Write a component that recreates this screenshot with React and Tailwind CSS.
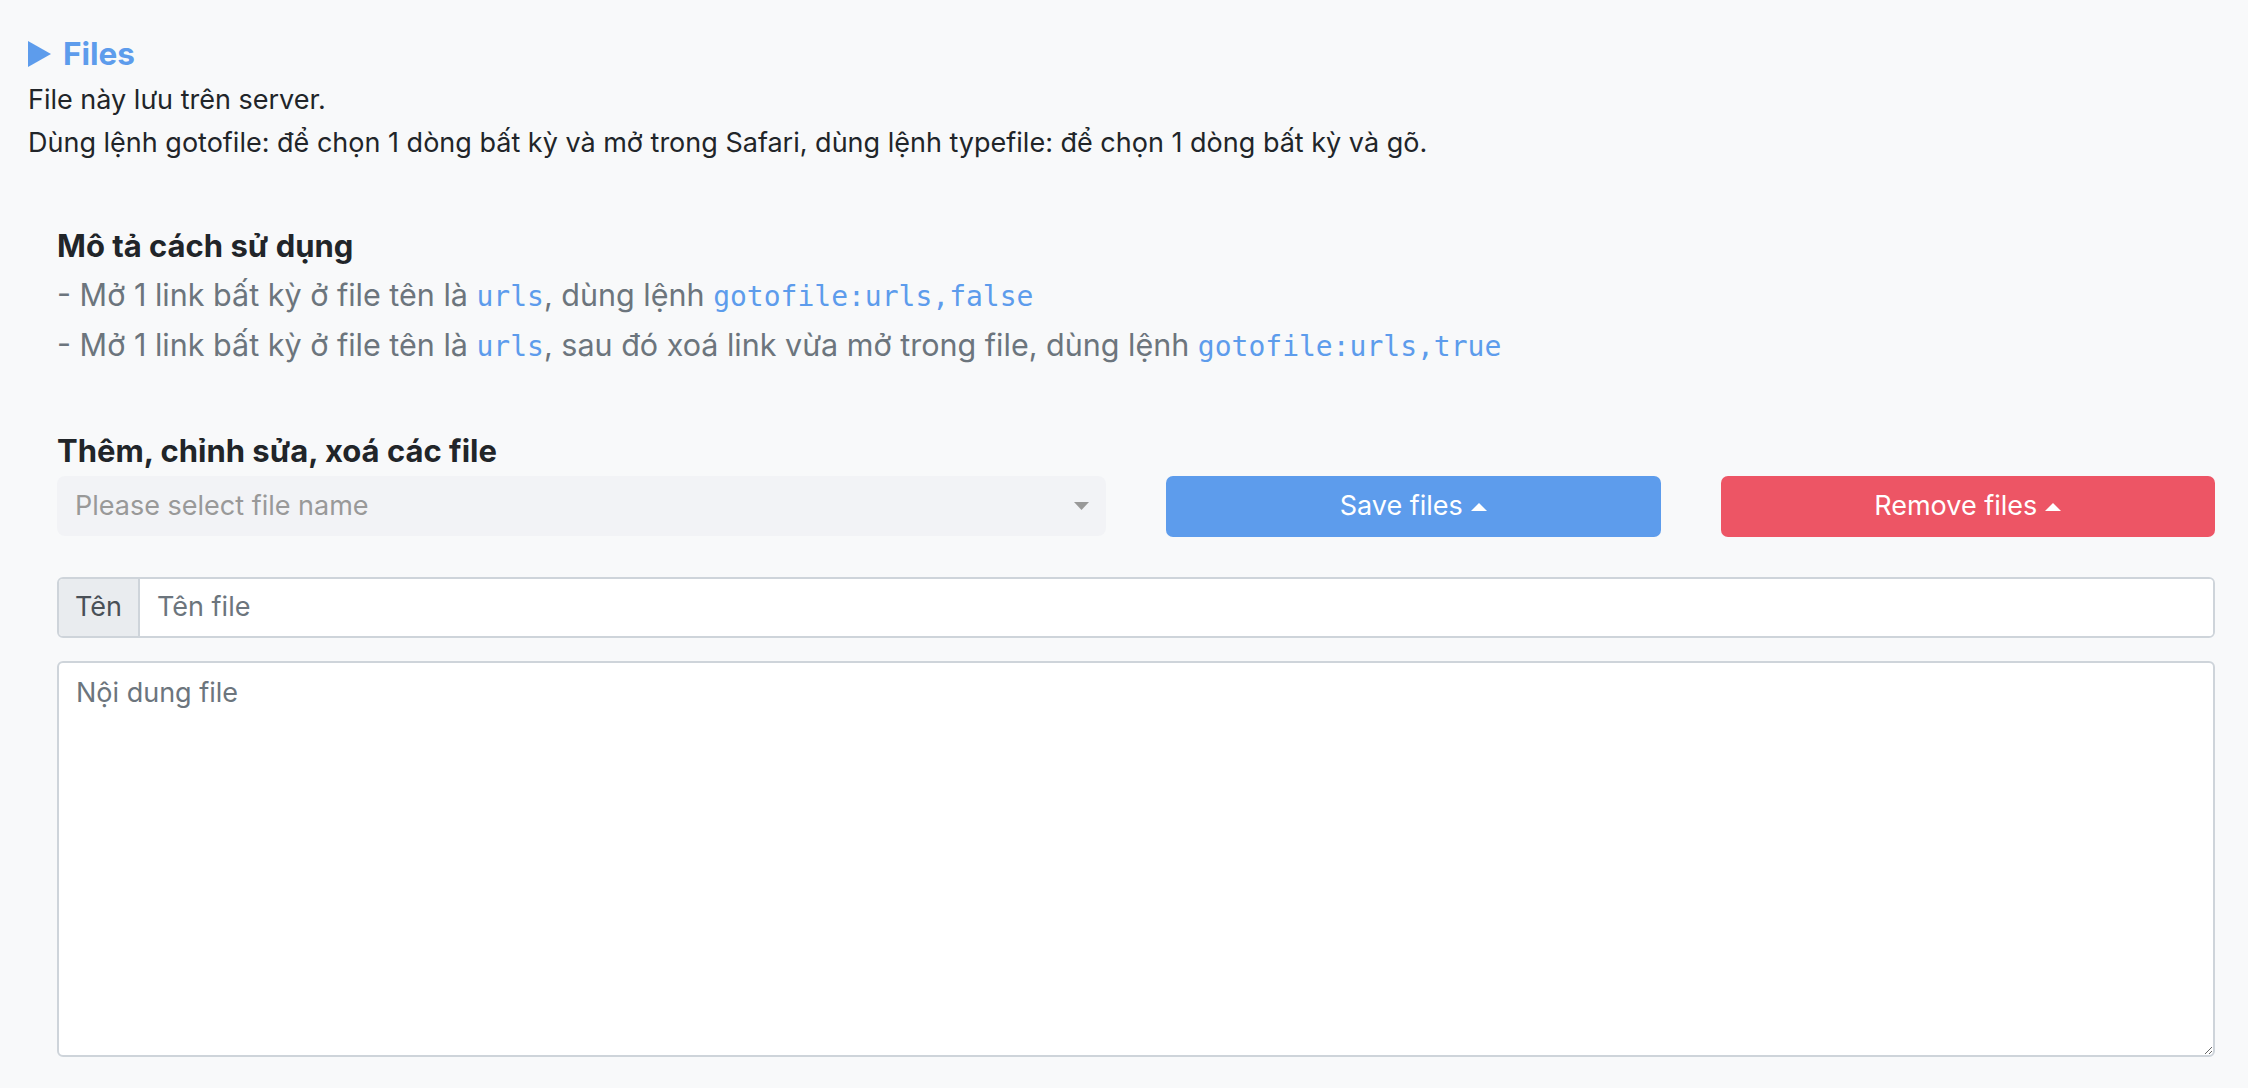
export default function App() {
  const sans = { fontFamily: "Inter, 'Noto Sans', sans-serif" };
  const mono = { fontFamily: "'DejaVu Sans Mono', monospace" };
  return (
    <div
      className="min-h-screen bg-[#f8f9fa] text-[#212529] pl-[28px] pt-[30px] pb-[30px]"
      style={sans}
    >
      {/* collapsible section header */}
      <div className="flex items-center gap-[12px] h-[48px] text-[#5d9cec]">
        <svg width="23" height="26" viewBox="0 0 23 26" className="shrink-0">
          <polygon points="0,0 23,13 0,26" fill="#5d9cec" />
        </svg>
        <span className="text-[31.5px] font-bold leading-[48px]">Files</span>
      </div>
      <div className="text-[27px] leading-[43px]">
        <div>File này lưu trên server.</div>
        <div>
          Dùng lệnh gotofile: để chọn 1 dòng bất kỳ và mở trong Safari, dùng lệnh typefile: để chọn 1 dòng bất kỳ và gõ.
        </div>
      </div>

      <div className="pl-[29px] pr-[33px]">
        <div className="mt-[62px] text-[31px] font-bold leading-[40px]">Mô tả cách sử dụng</div>
        <div className="mt-[5px] text-[30.5px] leading-[48px] text-[#6c757d]">
          <div>
            - Mở 1 link bất kỳ ở file tên là{" "}
            <code className="text-[28px] text-[#5d9cec]" style={mono}>urls</code>
            , dùng lệnh{" "}
            <code className="text-[28px] text-[#5d9cec]" style={mono}>gotofile:urls,false</code>
          </div>
          <div>
            - Mở 1 link bất kỳ ở file tên là{" "}
            <code className="text-[28px] text-[#5d9cec]" style={mono}>urls</code>
            , sau đó xoá link vừa mở trong file, dùng lệnh{" "}
            <code className="text-[28px] text-[#5d9cec]" style={mono}>gotofile:urls,true</code>
          </div>
        </div>

        <div className="mt-[60px] text-[31px] font-bold leading-[40px]">Thêm, chỉnh sửa, xoá các file</div>

        <div className="mt-[5px] grid grid-cols-4 gap-x-[60px]">
          <div className="col-span-2 h-[60px] rounded-[8px] bg-[#f2f3f6] flex items-center justify-between pl-[18px] pr-[17px]">
            <span className="text-[27px] text-[#999999]">Please select file name</span>
            <svg width="15" height="8" viewBox="0 0 15 8">
              <polygon points="0,0 15,0 7.5,8" fill="#999999" />
            </svg>
          </div>
          <button className="h-[61px] rounded-[7px] bg-[#5d9cec] text-white text-[27px] flex items-center justify-center gap-[8px]">
            <span>Save files</span>
            <svg width="16" height="8" viewBox="0 0 16 8">
              <polygon points="0,8 16,8 8,0" fill="#ffffff" />
            </svg>
          </button>
          <button className="h-[61px] rounded-[7px] bg-[#ed5565] text-white text-[27px] flex items-center justify-center gap-[8px]">
            <span>Remove files</span>
            <svg width="16" height="8" viewBox="0 0 16 8">
              <polygon points="0,8 16,8 8,0" fill="#ffffff" />
            </svg>
          </button>
        </div>

        <div className="mt-[40px] flex h-[61px] rounded-[6px] border-2 border-[#ced4da] overflow-hidden bg-white">
          <div className="flex items-center px-[16px] bg-[#e9ecef] border-r-2 border-[#ced4da] text-[27px] text-[#495057]">Tên</div>
          <input
            className="flex-1 px-[17px] text-[27px] text-[#495057] outline-none bg-white placeholder:text-[#6c757d]"
            placeholder="Tên file"
            style={sans}
          />
        </div>

        <textarea
          className="mt-[23px] block w-full h-[396px] rounded-[6px] border-2 border-[#ced4da] bg-white px-[17px] py-[10px] text-[27px] leading-[40px] outline-none placeholder:text-[#6c757d]"
          placeholder="Nội dung file"
          style={sans}
        />
      </div>
    </div>
  );
}
